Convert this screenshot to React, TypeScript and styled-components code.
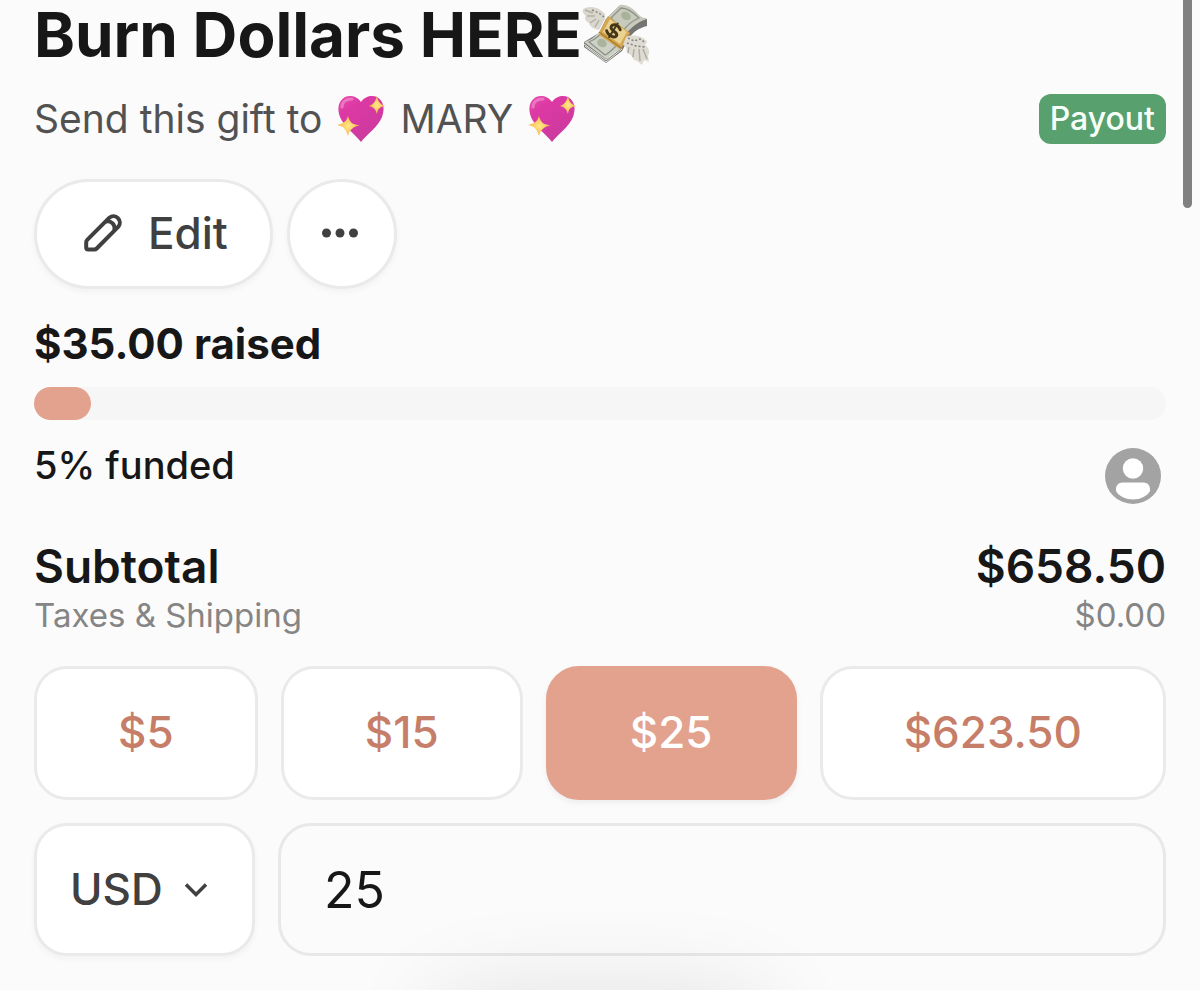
import React, { useState } from "react";
import styled, { createGlobalStyle, css } from "styled-components";

const GlobalStyle = createGlobalStyle`
  *, *::before, *::after { box-sizing: border-box; }
  html { background: #fbfbfb; }
  body {
    margin: 0;
    background: #fbfbfb;
    color: #171717;
    font-family: Inter, "Liberation Sans", sans-serif;
  }
  button, input, select { font-family: inherit; }
`;

const Page = styled.main`
  padding: 0 34px 34px;
`;

const Title = styled.h1`
  display: flex;
  align-items: center;
  margin: 0 0 24px;
  font-size: 62px;
  line-height: 70px;
  font-weight: 700;
`;

const Row = styled.div<{ $align?: string }>`
  display: flex;
  justify-content: space-between;
  align-items: ${(p) => p.$align ?? "center"};
`;

const Recipient = styled.p`
  display: flex;
  align-items: center;
  gap: 14px;
  margin: 0;
  font-size: 39px;
  line-height: 50px;
  color: #525252;
`;

const Badge = styled.span`
  padding: 0 11px;
  border-radius: 12px;
  background: #59a06f;
  color: #f7fff9;
  font-size: 32px;
  line-height: 50px;
  font-weight: 500;
`;

const Actions = styled.div`
  display: flex;
  gap: 14px;
  margin: 35px 0 30px;
`;

const surface = css`
  border: 3px solid #eaeaea;
  background: #ffffff;
  color: #404040;
  font-size: 44px;
`;

const PillButton = styled.button<{ $round?: boolean }>`
  ${surface}
  display: flex;
  align-items: center;
  justify-content: center;
  gap: 24px;
  height: 110px;
  width: ${(p) => (p.$round ? "110px" : "auto")};
  padding: ${(p) => (p.$round ? "0 3px 2px 0" : "0 42px 3px 47px")};
  border-radius: 55px;
  font-weight: 500;
  box-shadow: 0 3px 6px rgba(0, 0, 0, 0.04);
`;

const Raised = styled.p`
  margin: 0 0 18px;
  font-size: 42px;
  line-height: 50px;
  font-weight: 700;
`;

const Track = styled.div`
  height: 33px;
  border-radius: 17px;
  background: #f6f6f6;
`;

const Fill = styled.div`
  height: 100%;
  border-radius: 17px;
  background: #e3a28d;
`;

const FundedRow = styled(Row)`
  margin: 25px 0 35px;
  padding-right: 5px;
`;

const Funded = styled.p`
  margin: 0;
  font-size: 38px;
  line-height: 40px;
  font-weight: 500;
`;

const Avatar = styled.svg`
  width: 56px;
  height: 56px;
  margin-top: 3px;
`;

const Subtotal = styled(Row)`
  font-size: 46px;
  line-height: 54px;
  font-weight: 600;
`;

const Taxes = styled(Row)`
  font-size: 33px;
  line-height: 44px;
  color: #858585;
`;

const Amounts = styled.div`
  display: flex;
  gap: 23px;
  margin: 29px 0 23px;
`;

const AmountButton = styled.button<{ $active: boolean }>`
  ${surface}
  flex: 1 1 auto;
  height: 134px;
  padding: 0 0 2px;
  border-radius: 33px;
  font-weight: 500;
  color: #c67e69;
  ${(p) =>
    p.$active &&
    css`
      border-color: #e3a28d;
      background: #e3a28d;
      color: #ffffff;
      box-shadow: 0 3px 6px rgba(0, 0, 0, 0.06);
    `}
`;

const Entry = styled.div`
  display: flex;
  gap: 23px;
`;

const CurrencyField = styled.label`
  position: relative;
  flex: none;
`;

const Currency = styled.select`
  ${surface}
  appearance: none;
  width: 221px;
  height: 133px;
  padding: 0 33px 2px;
  border-radius: 33px;
  font-weight: 500;
  box-shadow: 0 3px 6px rgba(0, 0, 0, 0.04);
`;

const Chevron = styled.svg`
  position: absolute;
  right: 47px;
  top: 58px;
  width: 24px;
  height: 18px;
  pointer-events: none;
`;

const AmountInput = styled.input`
  flex: 1;
  min-width: 0;
  height: 133px;
  padding: 0 43px;
  border: 3px solid #e8e8e8;
  border-radius: 33px;
  background: transparent;
  color: #171717;
  font-size: 50px;
  outline: none;
`;

const ScrollThumb = styled.div`
  position: fixed;
  top: -5px;
  right: 8px;
  width: 9px;
  height: 213px;
  border-radius: 5px;
  background: #808080;
`;

const DockShadow = styled.div`
  position: fixed;
  left: 50%;
  bottom: -110px;
  width: 340px;
  height: 100px;
  margin-left: -170px;
  border-radius: 50px;
  box-shadow: 0 0 100px rgba(0, 0, 0, 0.12);
  pointer-events: none;
`;

const EmojiMoney = styled.svg`
  width: 68px;
  height: 62px;
`;

const EmojiHeart = styled.svg`
  width: 50px;
  height: 50px;
`;

function MoneyWings() {
  return (
    <EmojiMoney viewBox="0 0 68 62" role="img" aria-label="Money with wings">
      <path d="M1 5C8 1 17 3 23 10L23 15L17 26C12 25 8 23 7 19C3 17 2 14 4 12C1 10 0 7 1 5Z" fill="#d9d7ce" />
      <path d="M3 6L11 9M5 12L13 12M8 19L14 15M13 23L17 16" stroke="#b3b0a5" strokeWidth="1.5" fill="none" />
      <path d="M10 6L17 9L22 13" stroke="#88857c" strokeWidth="1.5" strokeDasharray="2 2" fill="none" />
      <path d="M24 15L37 2C43 1 50 4 57 13L65 15L65 22C57 24 51 28 47 34L40 47L24 59L2 43L2 38L17 29Z" fill="#747570" />
      <path d="M25 14L38 1C44 0 51 4 56 10C59 13 61 14 65 15C55 18 48 24 42 33Z" fill="#c7cabd" />
      <path d="M29 14L39 4C46 4 51 8 57 14C50 17 45 21 41 27Z" fill="none" stroke="#8f9487" strokeWidth="1.3" />
      <ellipse cx="44" cy="12" rx="5" ry="4" fill="#a8b29b" transform="rotate(30 44 12)" />
      <path d="M2 38C9 36 13 33 18 27L39 43C34 48 29 53 24 55Z" fill="#cdd0c5" />
      <path d="M7 38C13 36 15 33 19 30L34 42C29 47 26 50 23 51Z" fill="none" stroke="#8d9288" strokeWidth="1.3" />
      <ellipse cx="20" cy="39" rx="5" ry="4" fill="#a9b39e" transform="rotate(30 20 39)" />
      <path d="M2 40L24 56L39 44M3 42L24 58L40 45" stroke="#e7e7e0" strokeWidth="1" fill="none" />
      <path d="M26 12L48 29L40 43L39 46L17 31L18 27Z" fill="#d4a750" />
      <path d="M28 15L45 28L38 40L21 28Z" fill="#ead391" />
      <path d="M17 28L39 44" stroke="#a97b2d" strokeWidth="1.5" />
      <g transform="rotate(32 31 26)" fill="none" stroke="#453719" strokeWidth="3" strokeLinecap="round">
        <path d="M37 22C32 18 26 21 28 25C30 28 37 25 37 29C37 33 29 33 26 30" />
        <path d="M31.500 18V34" strokeWidth="2" />
      </g>
      <path d="M44 33C51 30 60 32 65 37L63 41C68 45 68 49 66 52L67 58L62 56L60 61L55 57L52 56L49 51L45 49L44 43L41 41Z" fill="#dddbd2" />
      <path d="M47 43L46 49M52 45L51 53M57 45L58 57M61 45L65 55" stroke="#b0ada2" strokeWidth="1.500" />
      <path d="M46 34L52 37L58 35L64 39M45 39L54 42L63 43" fill="none" stroke="#85827a" strokeWidth="1.500" strokeDasharray="2 2" />
    </EmojiMoney>
  );
}

function SparklingHeart() {
  return (
    <EmojiHeart viewBox="0 0 50 50" role="img" aria-label="Sparkling heart">
      <defs>
        <linearGradient id="heart" x1="0" y1="0" x2="0.7" y2="1">
          <stop offset="0" stopColor="#e650ad" />
          <stop offset="0.3" stopColor="#dd38a4" />
          <stop offset="1" stopColor="#c93b9d" />
        </linearGradient>
        <radialGradient id="spark">
          <stop offset="0" stopColor="#ffe98a" />
          <stop offset="1" stopColor="#f7b54a" />
        </radialGradient>
      </defs>
      <path d="M25 8C21 2 14 1 9 3C2 7 1 15 4 23C8 33 18 39 25 48C32 39 42 33 46 23C49 15 48 7 41 3C36 1 29 2 25 8Z" fill="url(#heart)" />
      <path d="M6 13C6 8 10 5 16 5" stroke="#f18bca" strokeWidth="3" strokeLinecap="round" fill="none" opacity=".7" />
      <path d="M12 22C14 29 17 31 24 31C17 33 14 35 12 42C10 35 7 32 1 31C8 29 10 28 12 22Z" fill="url(#spark)" />
      <path d="M41 2C42 8 44 10 49 12C44 13 42 14 41 20C39 14 37 13 33 12C38 10 39 8 41 2Z" fill="url(#spark)" />
    </EmojiHeart>
  );
}

function PencilIcon() {
  return (
    <svg width="40" height="40" viewBox="0 0 40 40" fill="none" stroke="#404040" strokeWidth="4" strokeLinejoin="round" aria-hidden="true">
      <path d="M3.200 26.800L25.400 4.700A6.400 6.400 0 0 1 34.400 13.700L12.700 35.500Q11.700 36.500 10.300 36.500H4.200Q2.200 36.500 2.200 34.500V29.200Q2.200 27.800 3.200 26.800Z" />
      <path d="M21.500 8.500C27.500 7.500 31.500 11.500 30.500 17.500" />
    </svg>
  );
}

const AMOUNTS = [
  { label: "$5", value: "5" },
  { label: "$15", value: "15" },
  { label: "$25", value: "25" },
  { label: "$623.50", value: "623.50" },
];

export default function App() {
  const [amount, setAmount] = useState("25");
  const funded = 5;

  return (
    <>
      <GlobalStyle />
      <Page>
        <Title>
          <span>Burn Dollars HERE</span>
          <MoneyWings />
        </Title>
        <Row>
          <Recipient>
            <span>Send this gift to</span>
            <SparklingHeart />
            <span>MARY</span>
            <SparklingHeart />
          </Recipient>
          <Badge>Payout</Badge>
        </Row>
        <Actions>
          <PillButton type="button">
            <PencilIcon />
            Edit
          </PillButton>
          <PillButton type="button" $round aria-label="More options">
            <svg width="36" height="10" viewBox="0 0 36 10" fill="#404040" aria-hidden="true">
              <circle cx="4.500" cy="5" r="4.500" />
              <circle cx="18" cy="5" r="4.500" />
              <circle cx="31.500" cy="5" r="4.500" />
            </svg>
          </PillButton>
        </Actions>
        <Raised>$35.00 raised</Raised>
        <Track role="progressbar" aria-valuenow={funded} aria-valuemin={0} aria-valuemax={100} aria-label="Funded">
          <Fill style={{ width: `${funded}%` }} />
        </Track>
        <FundedRow $align="flex-start">
          <Funded>{funded}% funded</Funded>
          <Avatar viewBox="0 0 56 56" role="img" aria-label="Contributor">
            <circle cx="28" cy="28" r="28" fill="#a3a3a3" />
            <circle cx="28" cy="20.500" r="10.200" fill="#ffffff" />
            <path d="M17.500 34.500H38.500C43 34.500 45.500 38 45 43C42 48.500 35 51.500 28 51.500S14 48.500 11 43C10.500 38 13 34.500 17.500 34.500Z" fill="#ffffff" />
          </Avatar>
        </FundedRow>
        <Subtotal>
          <span>Subtotal</span>
          <span>$658.50</span>
        </Subtotal>
        <Taxes>
          <span>Taxes &amp; Shipping</span>
          <span>$0.00</span>
        </Taxes>
        <Amounts>
          {AMOUNTS.map((a) => (
            <AmountButton
              key={a.value}
              type="button"
              $active={amount === a.value}
              aria-pressed={amount === a.value}
              onClick={() => setAmount(a.value)}
            >
              {a.label}
            </AmountButton>
          ))}
        </Amounts>
        <Entry>
          <CurrencyField>
            <Currency aria-label="Currency" defaultValue="USD">
              <option>USD</option>
            </Currency>
            <Chevron viewBox="0 0 24 18" fill="none" stroke="#404040" strokeWidth="3.5" aria-hidden="true">
              <path d="M2 3.500L12 13.500L22 3.500" />
            </Chevron>
          </CurrencyField>
          <AmountInput
            aria-label="Amount"
            inputMode="decimal"
            value={amount}
            onChange={(e) => setAmount(e.target.value)}
          />
        </Entry>
      </Page>
      <DockShadow />
      <ScrollThumb />
    </>
  );
}
